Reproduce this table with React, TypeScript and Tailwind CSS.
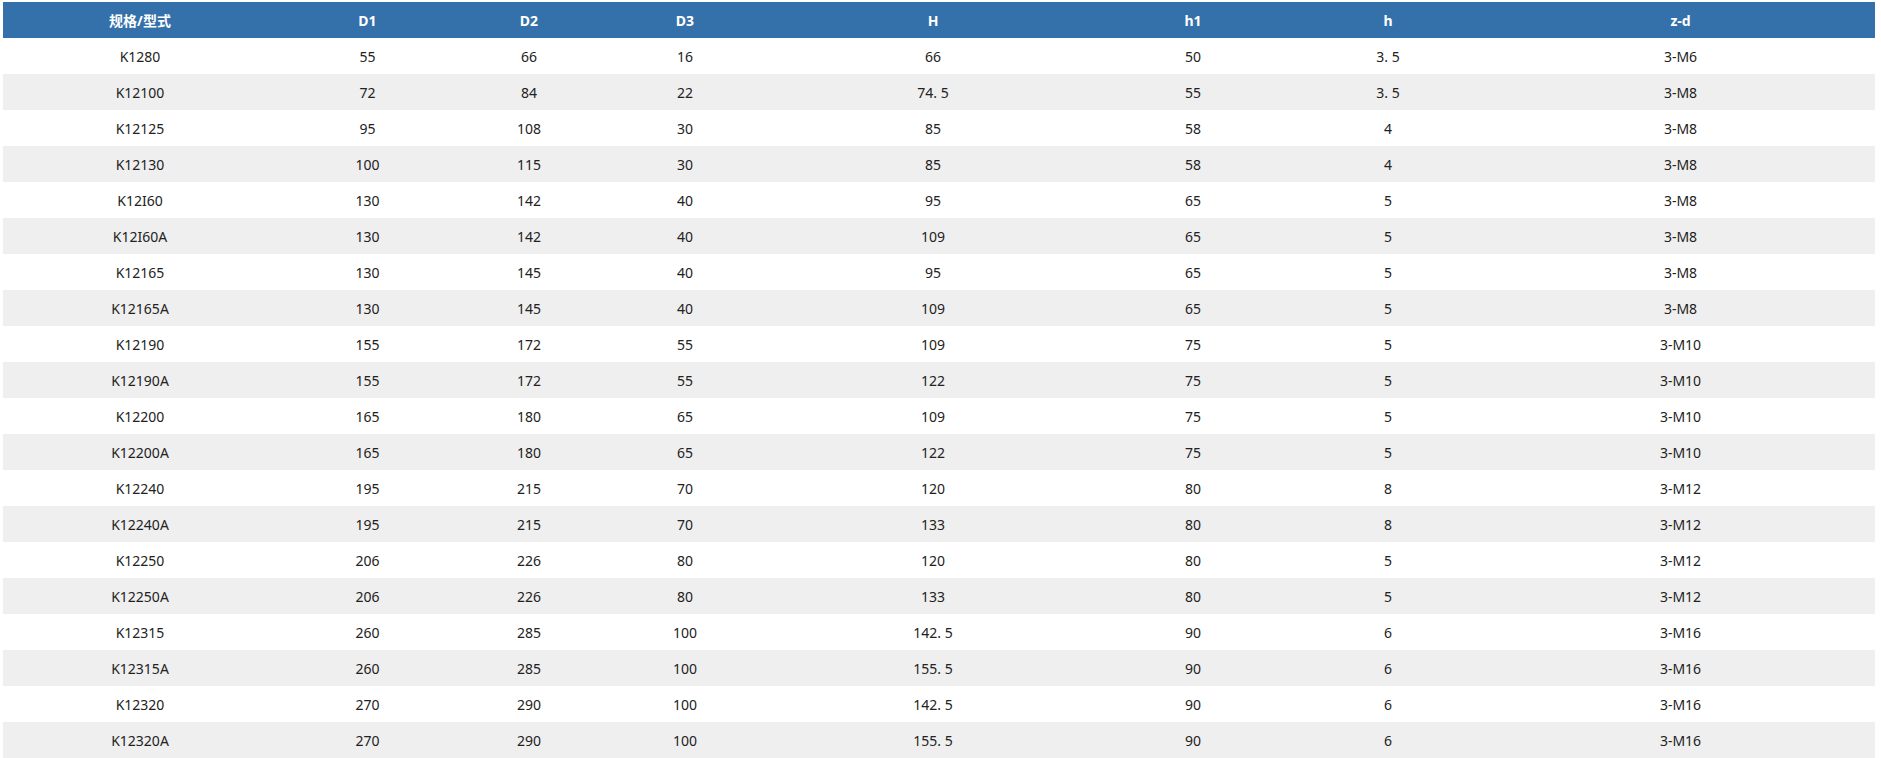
import React from "react";

const rows: string[][] = [
  ["K1280", "55", "66", "16", "66", "50", "3. 5", "3-M6"],
  ["K12100", "72", "84", "22", "74. 5", "55", "3. 5", "3-M8"],
  ["K12125", "95", "108", "30", "85", "58", "4", "3-M8"],
  ["K12130", "100", "115", "30", "85", "58", "4", "3-M8"],
  ["K12I60", "130", "142", "40", "95", "65", "5", "3-M8"],
  ["K12I60A", "130", "142", "40", "109", "65", "5", "3-M8"],
  ["K12165", "130", "145", "40", "95", "65", "5", "3-M8"],
  ["K12165A", "130", "145", "40", "109", "65", "5", "3-M8"],
  ["K12190", "155", "172", "55", "109", "75", "5", "3-M10"],
  ["K12190A", "155", "172", "55", "122", "75", "5", "3-M10"],
  ["K12200", "165", "180", "65", "109", "75", "5", "3-M10"],
  ["K12200A", "165", "180", "65", "122", "75", "5", "3-M10"],
  ["K12240", "195", "215", "70", "120", "80", "8", "3-M12"],
  ["K12240A", "195", "215", "70", "133", "80", "8", "3-M12"],
  ["K12250", "206", "226", "80", "120", "80", "5", "3-M12"],
  ["K12250A", "206", "226", "80", "133", "80", "5", "3-M12"],
  ["K12315", "260", "285", "100", "142. 5", "90", "6", "3-M16"],
  ["K12315A", "260", "285", "100", "155. 5", "90", "6", "3-M16"],
  ["K12320", "270", "290", "100", "142. 5", "90", "6", "3-M16"],
  ["K12320A", "270", "290", "100", "155. 5", "90", "6", "3-M16"],
];

const headers = ["规格/型式", "D1", "D2", "D3", "H", "h1", "h", "z-d"];

export default function App() {
  return (
    <div
      className="w-[1881px] h-[758px] bg-white pt-[2px] px-[3px] overflow-hidden"
      style={{ fontFamily: '"Noto Sans", "Noto Sans CJK SC", sans-serif' }}
    >
      <table className="w-[1872px] table-fixed border-collapse text-[14px] text-[#222]">
        <colgroup>
          <col className="w-[274px]" />
          <col className="w-[181px]" />
          <col className="w-[142px]" />
          <col className="w-[170px]" />
          <col className="w-[326px]" />
          <col className="w-[194px]" />
          <col className="w-[196px]" />
          <col className="w-[389px]" />
        </colgroup>
        <thead>
          <tr className="h-[36px] bg-[#3470aa]">
            {headers.map((h) => (
              <th key={h} className="p-0 text-center font-bold text-white text-[14px]">
                {h}
              </th>
            ))}
          </tr>
        </thead>
        <tbody>
          {rows.map((r, i) => (
            <tr key={i} className={i % 2 === 1 ? "h-[36px] bg-[#efefef]" : "h-[36px] bg-white"}>
              {r.map((c, j) => (
                <td key={j} className="p-0 text-center">
                  {c}
                </td>
              ))}
            </tr>
          ))}
        </tbody>
      </table>
    </div>
  );
}
